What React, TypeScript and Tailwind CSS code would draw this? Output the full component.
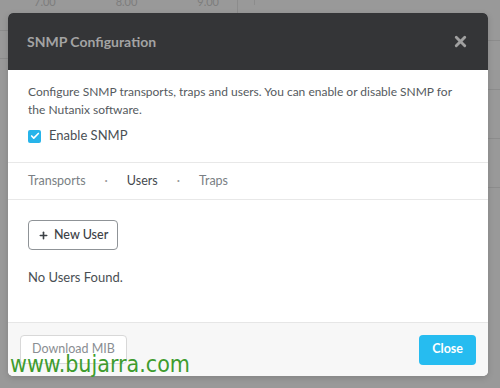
import { Check, Plus, X } from 'lucide-react'

const font = { fontFamily: 'Lato, "Open Sans", "Liberation Sans", sans-serif' }

function Backdrop() {
  // faded dashboard behind the overlay
  return (
    <div className="absolute inset-0 pointer-events-none">
      <div className="absolute left-[34px] top-[-6px] w-[185px] flex justify-between text-[11px] text-[#7d7d7d]">
        <span>7.00</span>
        <span>8.00</span>
        <span>9.00</span>
      </div>
      <div className="absolute left-[237px] top-0 h-[13px] w-px bg-[#8c8c8c]" />
      <div className="absolute left-[254px] top-0 h-[5px] w-px bg-[#8c8c8c]" />
      <div className="absolute left-0 top-[30px] bottom-0 w-[8px] flex flex-col gap-[27px]">
        <div className="h-px bg-[#8c8c8c]" />
        <div className="h-px bg-[#8c8c8c]" />
      </div>
      <div className="absolute right-0 top-[40px] w-[12px] flex flex-col gap-[48px]">
        <div className="h-px bg-[#8c8c8c]" />
        <div className="h-px bg-[#8c8c8c]" />
        <div className="h-px bg-[#8c8c8c]" />
        <div className="h-px bg-[#8c8c8c]" />
      </div>
    </div>
  )
}

export default function App() {
  return (
    <div className="relative w-[500px] h-[388px] bg-[#999999] overflow-hidden" style={font}>
      <Backdrop />

      <div className="relative ml-[8px] mt-[13px] w-[480px] rounded-[5px] bg-white overflow-hidden shadow-[0_2px_6px_rgba(0,0,0,0.15)]">
        <div className="h-[57px] bg-[#343537] flex items-center justify-between pl-[19px] pr-[19px]">
          <h2 className="text-[14px] font-bold text-[#a3a3a3]">SNMP Configuration</h2>
          <button className="text-[#a0a0a0]">
            <X size={17} strokeWidth={4} />
          </button>
        </div>

        <div className="px-[20px] pt-[13px] pb-[17px]">
          <p className="text-[12px] leading-[18px] text-[#555a5e]">
            Configure SNMP transports, traps and users. You can enable or disable SNMP for the Nutanix software.
          </p>
          <label className="mt-[8px] h-[18px] flex items-center gap-[8px]">
            <span className="w-[13px] h-[13px] rounded-[2px] bg-[#27b4ea] flex items-center justify-center">
              <Check size={10} strokeWidth={4} className="text-white" />
            </span>
            <span className="text-[13px] text-[#4a4f54]">Enable SNMP</span>
          </label>
        </div>

        <div className="border-t border-b border-[#e8e8e8] h-[38px] flex items-center pl-[20px] text-[12.5px] gap-[19px]">
          <span className="text-[#7a7f84]">Transports</span>
          <span className="text-[#999]">·</span>
          <span className="text-[#44494e]">Users</span>
          <span className="text-[#999]">·</span>
          <span className="text-[#7a7f84]">Traps</span>
        </div>

        <div className="px-[20px] pt-[20px] h-[122px]">
          <button className="h-[30px] px-[9px] border border-[#8f9397] rounded-[4px] flex items-center gap-[5px] text-[12.5px] text-[#3c4146]">
            <Plus size={11} strokeWidth={3.5} />
            <span className="font-medium">New User</span>
          </button>
          <p className="mt-[18px] leading-[18px] text-[13px] text-[#4a4f54]">No Users Found.</p>
        </div>

        <div className="h-[54px] bg-[#f7f7f7] border-t border-[#e6e6e6] flex items-center justify-between px-[12px]">
          <button className="h-[29px] px-[11px] bg-white border border-[#d8d8d8] rounded-[4px] text-[12.5px] text-[#8a8e92]">
            Download MIB
          </button>
          <button className="h-[30px] px-[13px] bg-[#26bcf0] rounded-[4px] text-[12.5px] font-bold text-white">
            Close
          </button>
        </div>
      </div>

      <div
        className="absolute left-[10px] top-[353px] text-[23px] leading-[23px] text-[#3e9c2e]"
        style={{ fontFamily: '"DejaVu Sans Condensed", "DejaVu Sans", sans-serif' }}
      >
        www.bujarra.com
      </div>
    </div>
  )
}
